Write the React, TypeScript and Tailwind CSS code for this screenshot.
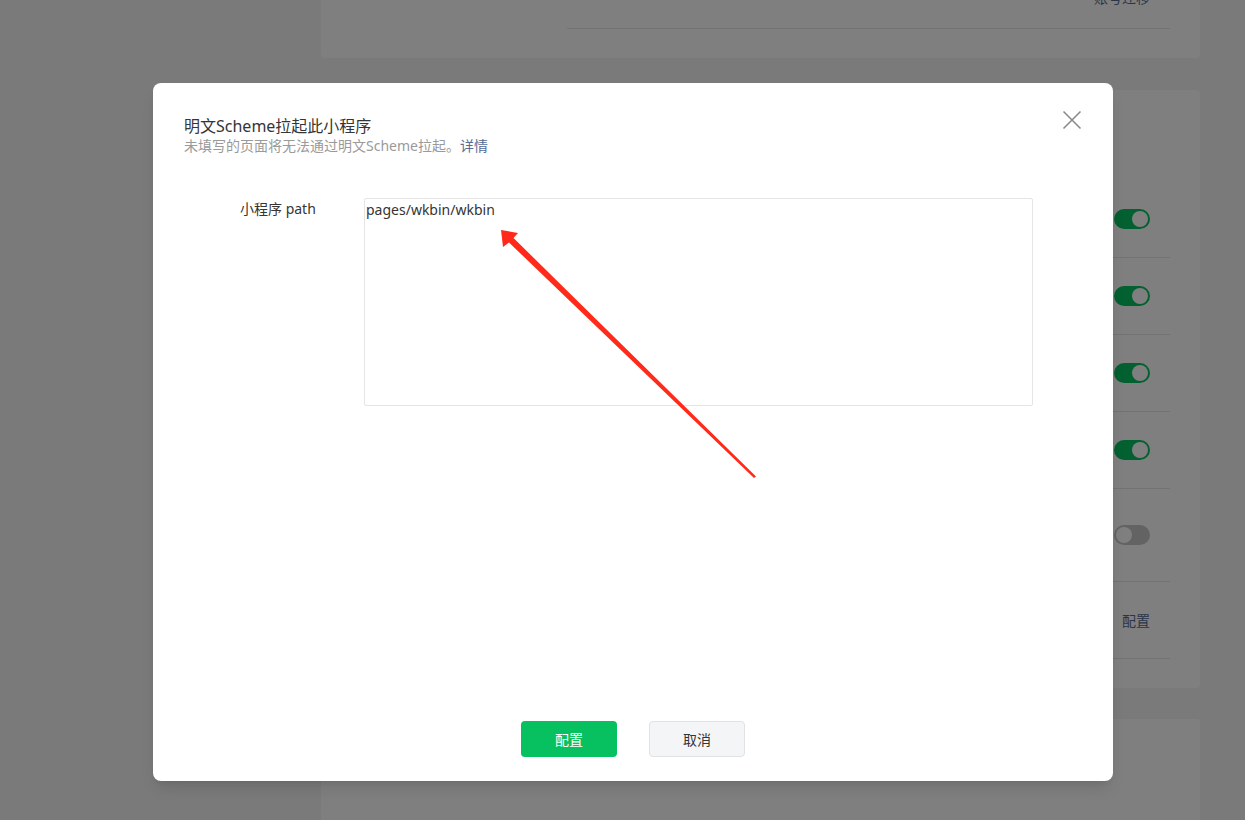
import React from "react";

const font = { fontFamily: '"Noto Sans", "Noto Sans CJK SC", sans-serif' };

function Toggle({ on }: { on: boolean }) {
  return (
    <div
      className={`w-[36px] h-[20px] rounded-full flex items-center px-[2px] ${
        on ? "bg-[#07c160] justify-end" : "bg-[#c7c7c7] justify-start"
      }`}
    >
      <div className="w-[16px] h-[16px] rounded-full bg-white" />
    </div>
  );
}

function Row({ h, children }: { h: string; children: React.ReactNode }) {
  return (
    <div className={`${h} ml-[246px] mr-[30px] border-b border-[#e5e5e5] flex items-center justify-end pr-[20px]`}>
      {children}
    </div>
  );
}

export default function App() {
  return (
    <div className="relative w-[1245px] h-[820px] overflow-hidden bg-[#f5f5f5]" style={font}>
      {/* background page */}
      <div className="ml-[321px] w-[879px] flex flex-col gap-[32px] -mt-[40px]">
        <div className="h-[98px] bg-white rounded-[4px] flex flex-col">
          <div className="h-[69px] ml-[246px] mr-[30px] border-b border-[#e5e5e5] flex items-end justify-end pr-[20px] pb-[20px]">
            <span className="text-[14px] leading-[20px] text-[#576b95]">账号迁移</span>
          </div>
        </div>
        <div className="h-[598px] bg-white rounded-[4px] flex flex-col pt-[91px]">
          <Row h="h-[77px]"><Toggle on /></Row>
          <Row h="h-[77px]"><Toggle on /></Row>
          <Row h="h-[77px]"><Toggle on /></Row>
          <Row h="h-[77px]"><Toggle on /></Row>
          <Row h="h-[93px]"><Toggle on={false} /></Row>
          <Row h="h-[77px]"><span className="text-[14px] text-[#576b95]">配置</span></Row>
        </div>
        <div className="h-[200px] bg-white rounded-[4px] -mt-[1px]" />
      </div>

      {/* overlay */}
      <div className="absolute inset-0 bg-black/50" />

      {/* modal */}
      <div className="absolute left-[153px] top-[83px] w-[960px] h-[698px] bg-white rounded-[8px] shadow-lg flex flex-col">
        <div className="flex justify-between pl-[31px] pr-[31px] pt-[32px]">
          <div className="flex flex-col">
            <div className="text-[16px] leading-[22px] text-[#353535]">明文Scheme拉起此小程序</div>
            <div className="text-[14px] leading-[18px] text-[#9a9a9a]">
              未填写的页面将无法通过明文Scheme拉起。<span className="text-[#576b95]">详情</span>
            </div>
          </div>
          <button className="w-[20px] h-[20px] -mt-[5px] text-[#8a8a8a]">
            <svg viewBox="0 0 20 20" width="20" height="20" fill="none" stroke="currentColor" strokeWidth="1.6">
              <path d="M1.5 1.5 L18.5 18.5 M18.5 1.5 L1.5 18.5" />
            </svg>
          </button>
        </div>
        <div className="flex pt-[43px]">
          <div className="w-[211px] pl-[87px] pt-[1px] text-[14px] leading-[20px] text-[#353535]">小程序 path</div>
          <div className="w-[669px] h-[208px] border border-[#e5e5e5] rounded-[2px] px-[1px] pt-[1px] text-[14px] leading-[20px] text-[#353535]">
            pages/wkbin/wkbin
          </div>
        </div>
        <div className="flex-1" />
        <div className="flex justify-center gap-[32px] pb-[24px]">
          <button className="w-[96px] h-[36px] rounded-[4px] bg-[#07c160] text-white text-[14px]">配置</button>
          <button className="w-[96px] h-[36px] rounded-[4px] bg-[#f4f5f7] border border-[#e1e2e6] text-[#353535] text-[14px]">取消</button>
        </div>
      </div>

      {/* red annotation arrow */}
      <svg className="absolute left-0 top-0 pointer-events-none" width="1245" height="820">
        <polygon
          points="501,230 503,247 509,242.5 754,478 756,476.5 513.5,238 518,233"
          fill="#ff2a1a"
        />
      </svg>
    </div>
  );
}
